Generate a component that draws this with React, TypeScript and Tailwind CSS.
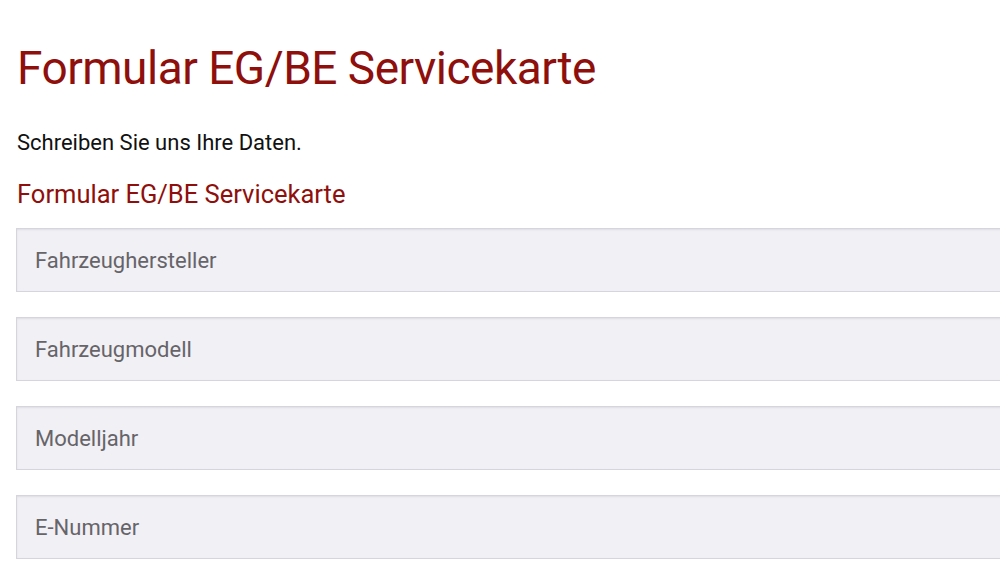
import React from "react";

const fields = ["Fahrzeughersteller", "Fahrzeugmodell", "Modelljahr", "E-Nummer"];

export default function App() {
  return (
    <div className="w-[1000px] h-[579px] overflow-hidden bg-white pl-[16px] pt-[40px]" style={{ fontFamily: "Roboto, 'Liberation Sans', sans-serif" }}>
      <h1 className="text-[46px] leading-[56px] tracking-[-0.5px] text-[#8e0f0c] font-normal m-0 pl-[1px]">Formular EG/BE Servicekarte</h1>
      <p className="mt-[34px] text-[22px] leading-[26px] text-[#111] pl-[1px]">Schreiben Sie uns Ihre Daten.</p>
      <h2 className="mt-[22px] text-[25.5px] leading-[32px] text-[#8e0f0c] font-normal pl-[1px]">Formular EG/BE Servicekarte</h2>
      <div className="mt-[18px] flex flex-col gap-[25px]">
        {fields.map((f) => (
          <div key={f} className="w-[1100px] h-[64px] bg-[#f1f0f5] border border-[#d6d4de] shadow-[inset_0_1px_2px_rgba(0,0,0,0.08)] flex items-center pl-[18px]">
            <span className="text-[22px] text-[#666469]">{f}</span>
          </div>
        ))}
      </div>
    </div>
  );
}
